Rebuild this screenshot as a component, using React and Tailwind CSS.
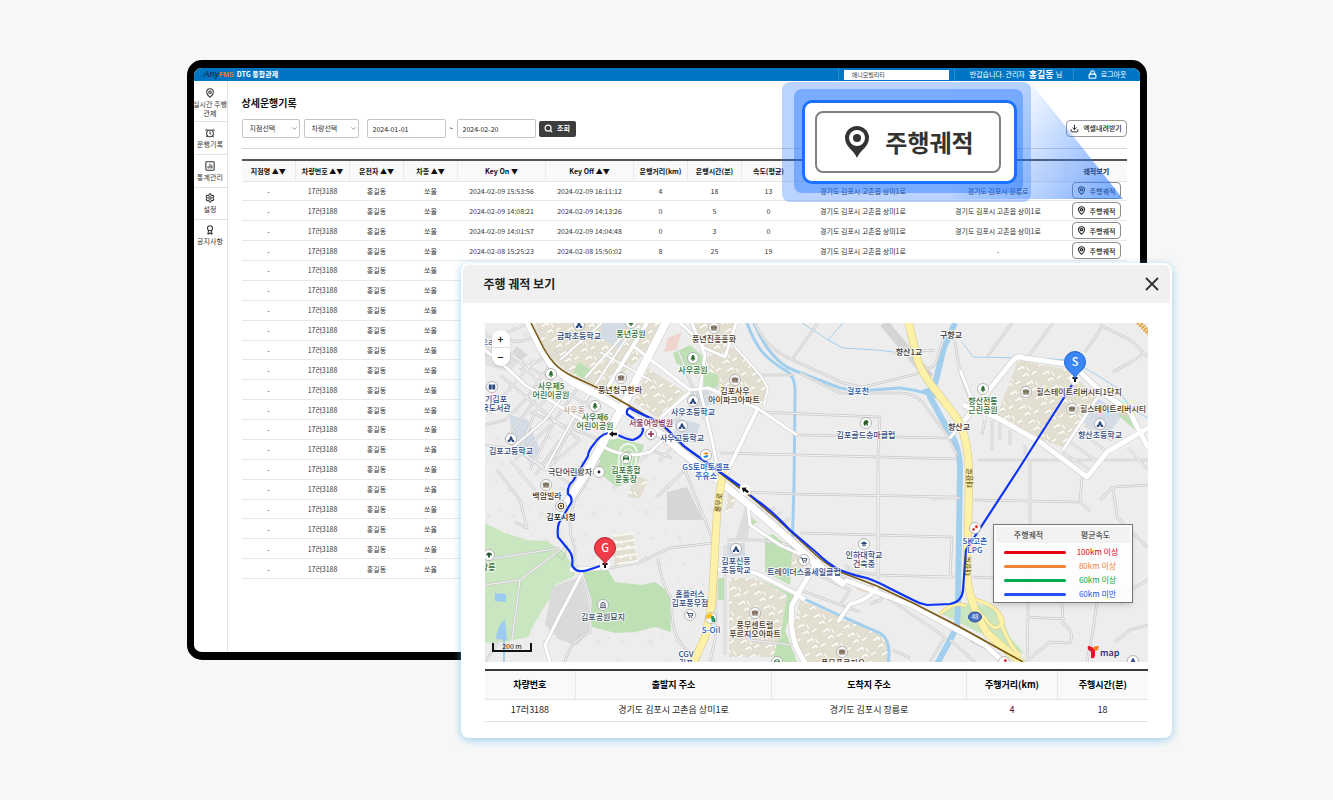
import React from 'react';
import { Search, MapPin, AlarmClock, Settings, Download, Lock, X, Award, ChevronDown } from 'lucide-react';

function ChartBox({ size }) {
  return (
    <svg width={size} height={size} viewBox="0 0 24 24" fill="none" stroke="currentColor" strokeWidth="2.5" strokeLinecap="round" aria-hidden="true">
      <rect x="2" y="2" width="20" height="20" rx="2" />
      <path d="M7.500 17V13M12 17V7M16.500 17V11" />
    </svg>
  );
}

const sideMenu = [
  { icon: MapPin, label: '실시간 주행 관제', size: 'h-[41px] pt-[3px]' },
  { icon: AlarmClock, label: '운행기록', size: 'h-[33px]' },
  { icon: ChartBox, label: '통계관리', size: 'h-[33px]' },
  { icon: Settings, label: '설정', size: 'h-[32px]' },
  { icon: Award, label: '공지사항', size: 'h-[31px]' },
];

const columns = [
  { label: '지점명 ▲▼', width: 54 },
  { label: '차량번호 ▲▼', width: 54 },
  { label: '운전자 ▲▼', width: 54 },
  { label: '차종 ▲▼', width: 54 },
  { label: 'Key On ▼', width: 88 },
  { label: 'Key Off ▲▼', width: 88 },
  { label: '운행거리(km)', width: 54 },
  { label: '운행시간(분)', width: 54 },
  { label: '속도(평균)', width: 54 },
  { label: '출발지', width: 135 },
  { label: '도착지', width: 135 },
  { label: '궤적보기', width: 61 },
];

const gochon = '경기도 김포시 고촌읍 상미1로';

const trips = [
  ['2024-02-09 15:53:56', '2024-02-09 16:11:12', '4', '18', '13', gochon, '경기도 김포시 장릉로'],
  ['2024-02-09 14:08:21', '2024-02-09 14:13:26', '0', '5', '0', gochon, gochon],
  ['2024-02-09 14:01:57', '2024-02-09 14:04:48', '0', '3', '0', gochon, gochon],
  ['2024-02-08 15:25:23', '2024-02-08 15:50:02', '8', '25', '19', gochon, '-'],
];

const emptyTrip = ['', '', '', '', '', '', ''];
const rows = Array.from({ length: 20 }, (_, i) => trips[i] || emptyTrip);

const speeds = [
  { label: '100km 이상', line: 'bg-[#e60012]', text: 'text-[#e60012]' },
  { label: '80km 이상', line: 'bg-[#f08336]', text: 'text-[#f08336]' },
  { label: '60km 이상', line: 'bg-[#00ab4e]', text: 'text-[#00ab4e]' },
  { label: '60km 미만', line: 'bg-[#2350f5]', text: 'text-[#2350f5]' },
];

// ---- map data ----
const GREEN = '#c9e6c1';
const TAN = '#e3dfd0';
const SCHOOL = '#d3dce5';

const areas = [
  [GREEN, '485,523 505,533 527,540 547,541 565,553 573,567 575,576 555,585 550,598 535,622 528,637 505,642 485,643'],
  ['#bfe0b5', '583,572 608,570 615,582 642,585 655,582 670,593 671,632 655,627 635,632 615,633 592,627 590,597'],
  ['#dadada', '552,587 581,576 588,598 591,630 577,645 560,640 545,625'],
  ['#d6d6d6', '667,492 687,487 703,520 667,520'],
  ['#e1e1e1', '485,330 500,345 520,360 510,372 485,365'],
  ['#d8d8d8', '517,346 528,355 521,360 512,352'],
  [TAN, '535,323 668,323 655,345 612,383 598,387 565,370 552,358 540,340'],
  [TAN, '648,368 685,392 658,418 634,402'],
  [TAN, '690,323 735,323 725,357 700,345'],
  [TAN, '703,358 735,347 760,375 768,388 764,405 727,400 718,385'],
  [TAN, '1018,360 1070,370 1097,398 1063,447 1047,442 997,415'],
  [TAN, '729,578 755,578 787,595 777,657 729,657'],
  [TAN, '800,600 840,617 860,623 880,633 890,647 887,662 803,662 792,633'],
  [TAN, '612,535 632,532 637,563 615,567'],
  [TAN, '633,474 648,480 640,499 628,497'],
  [TAN, '782,556 800,548 810,556 800,572 783,570'],
  [TAN, '728,492 738,494 732,508 725,515'],
  [SCHOOL, '602,323 628,323 620,348 600,338'],
  [SCHOOL, '510,415 528,420 540,450 530,462 512,448'],
  [SCHOOL, '688,392 708,390 712,405 690,407'],
  [SCHOOL, '676,418 700,424 695,443 674,437'],
  [SCHOOL, '1097,398 1123,415 1107,435 1083,422'],
  [SCHOOL, '727,543 745,543 745,572 727,572'],
  ['#bfe0b5', '590,460 612,437 644,445 632,480 617,487 598,472'],
  ['#bfe0b5', '673,353 690,345 702,355 704,375 690,372 676,363'],
  ['#bfe0b5', '703,370 718,375 718,393 704,388'],
  ['#bfe0b5', '578,362 592,370 587,380 573,373'],
  ['#bfe0b5', '765,537 773,534 792,550 790,585 765,572'],
  ['#bfe0b5', '755,577 797,597 785,630 797,662 772,662 782,625 787,595'],
  ['#bfe0b5', '718,578 726,578 726,600 718,600'],
  ['#bfe0b5', '749,515 757,522 751,526'],
  ['#bfe0b5', '1118,415 1125,408 1135,430 1128,424'],
  [GREEN, '963,603 997,607 1010,637 1025,654 990,638 940,613'],
  ['#f2d7d0', '858,583 869,587 867,593 857,590'],
  ['#f1d5cc', '668,338 682,332 676,350 664,352'],
  ['#ddd', '735,540 747,500 750,520 748,540'],
];

const water = [
  ['M747 323C757 350 765 358 788 372Q796 378 795 395L794 485L792 553', 3],
  ['M754 323C765 350 780 365 793 370L840 388L858 391L900 388Q918 390 930 395', 3],
  ['M955 323L944 347L936 380L930 397L947 428Q960 445 960 470L958 603L957 627L937 664', 6],
  ['M800 597L843 617L880 633Q892 640 888 664', 3],
  ['M802 323L828 340L843 348L877 350L893 352M828 340L843 323', 1],
  ['M962 342L973 357L1030 358L1070 360L1097 375L1117 388L1131 408L1148 418', 1],
  ['M504 640V662', 2],
];

// outlined light-grey lanes
const lanes = [
  'M818 323L793 358', 'M757 375H795', 'M760 412L880 417L878 455V575', 'M797 435L947 438',
  'M720 453L880 457L957 459', 'M750 492L793 494L957 497', 'M800 533L877 535L952 537L950 577L877 575L845 570',
  'M878 470V580', 'M800 373L840 393H900Q917 393 926 407L947 435L957 455',
  'M755 323Q765 348 793 360L843 383L863 387L920 373L935 365L945 335', 'M893 353L935 350',
  'M1012 323L987 357', 'M1053 323L1028 357', 'M1102 327L1085 352', 'M1100 325L1130 340L1148 357', 'M1145 352L1130 363L1113 372',
  'M953 332L960 372L970 400', 'M977 460H1148', 'M1030 462V520L1027 662', 'M973 500L1080 502L1082 477M1080 502L1090 511',
  'M930 498H960M930 577H955M973 577L995 578', 'M1100 500L1113 487L1148 485M1113 487L1117 517L1135 535L1148 548',
  'M1097 603L1093 630L1087 662', 'M1027 617L1065 619', 'M1062 603L1063 623Q1075 632 1070 643L1050 642L1028 660', 'M1148 625L1130 630L1115 642', 'M1148 580L1130 590L1120 604',
  'M485 355Q510 352 520 362L545 390L560 400', 'M500 335L530 323M500 335Q518 350 545 330', 'M535 360L500 400L485 408', 'M520 370L560 350',
  'M550 365L525 400L505 420L485 425', 'M565 375L535 412L520 450', 'M580 385L555 420L530 470', 'M592 392L570 430L548 470',
  'M500 375L560 425L580 440', 'M505 350L590 408', 'M485 445L520 450L545 470L580 440', 'M505 440L535 400M515 460L550 425', 'M530 412L600 440',
  'M497 470L520 500L527 528L515 522', 'M510 460L535 490M520 452L580 490', 'M535 475L560 440',
  'M600 460L575 500Q565 525 575 548L575 570', 'M600 570L640 562L670 548L712 543', 'M658 558Q660 580 672 600Q670 640 690 652',
  'M656 498L685 470L712 538', 'M678 350L705 420', 'M640 420L668 445', 'M650 440L675 420L720 385', 'M660 460L680 440', 'M640 462L650 450L672 458',
  'M583 576L591 600L590 632Q570 640 565 662', 'M485 585L520 580L560 550', 'M520 580L512 640M485 560L560 548',
  'M716 545V635L710 662M725 545V655', 'M727 540H760L790 545', 'M800 590L860 612M818 575L850 590L840 605M830 570L870 590M845 565L893 600',
  'M880 593L945 637M870 604L880 600L890 590M893 650L910 658M945 637L930 662M950 640L975 662M970 640L1000 655', 'M755 505L800 545M762 515L775 508M765 522L782 512M770 530L790 518',
  'M1070 442L1095 460M1078 430L1105 450M1085 425L1112 440M1062 452L1090 470M1128 448L1148 470', 'M750 640L792 645M485 662L500 640',
  'M992 420V450M1000 422V440M1010 430V445M985 420L982 435M1025 445V455',
];

// white streets with a thin casing: [path, width]
const streets = [
  ['M668 318L622 408L600 448L588 470L556 520', 8], ['M647 323L600 400', 4], ['M640 318L585 400', 2],
  ['M526 318L540 347L552 366L572 382L600 396L630 415L662 435L683 453L715 478L752 507L790 540L815 563L845 585', 7],
  ['M845 580L913 606L985 645L1010 668', 5],
  ['M560 360L602 323M585 378L628 330M600 352L650 380', 2], ['M632 345L690 390L708 388L757 408L797 435', 3], ['M758 408L728 470L718 490', 4],
  ['M690 318L705 355L700 390L712 440L718 470', 3], ['M700 346L725 357L736 323M680 323L704 345', 3],
  ['M735 347L760 375L768 388L764 405', 2], ['M600 445Q625 460 650 452L668 435', 3], ['M660 418L690 392', 3],
  ['M485 350Q505 365 525 385L590 425', 3], ['M545 470L575 415', 2], ['M512 448L545 420L560 400', 2],
  ['M963 422L1010 364Q1016 354 1024 358L1073 365L1097 388L1130 412L1148 448', 5],
  ['M963 405L998 418L1040 442L1087 477L1107 452L1148 428', 5], ['M1097 398L1063 450M950 438L963 422M960 370L975 408', 3],
  ['M712 570Q745 568 760 575L795 593L805 600', 4], ['M818 560Q800 590 792 605Q788 640 806 664', 5],
  ['M878 585Q870 600 850 604L838 622', 4], ['M582 573L560 615L545 645L550 662', 3], ['M570 570L600 568', 4],
  ['M748 505L750 525L780 545L812 560', 3],
];

const yellowRoads = [
  'M908 320L917 358Q920 370 933 387L957 418Q970 440 969 485L967 570Q967 600 987 633L1012 655L1025 666',
  'M723 470L717 513L712 603L705 637L692 666',
  'M969 598Q1000 605 1003 622Q995 635 985 618L972 606M940 614Q955 600 966 606M997 610Q1005 640 1020 656',
];

const routes = [
  'M600 566L588 570Q576 574 572 565Q574 555 567 548L558 537Q557 528 559 523L571 503Q573 497 568 494Q567 486 573 481L588 456Q588 451 594 444Q600 435 608 433',
  'M618 435Q628 440 633 440Q642 437 643 430Q643 426 637 421L627 414Q626 409 630 408Q636 412 655 420Q664 425 668 430L685 447L717 470L740 486',
  'M750 495L759 502Q772 511 790 530L817 553Q828 564 840 570Q852 575 867 578Q880 583 887 587L913 600Q920 604 927 605L950 604Q962 602 963 590L966 550L1018 470L1072 385',
];

const NAVY = '#2f4a80';
const BROWN = '#4a3728';
const LEAF = '#2d6e34';
const BLUE = '#2159b8';
const DARK = '#333';

const places = [
  [579, 339, '금파초등학교', NAVY], [631, 337, '풍년공원', LEAF], [714, 342, '풍년진흥흥화', BROWN], [693, 373, '사우공원', LEAF],
  [551, 389, '사우제5', LEAF], [551, 398, '어린이공원', LEAF], [620, 393, '풍년청구한라', BROWN], [595, 420, '사우제6', LEAF], [595, 429, '어린이공원', LEAF],
  [735, 394, '김포사우', BROWN], [734, 403, '아이파크아파트', BROWN], [693, 415, '사우초등학교', NAVY], [651, 426, '서울여성병원', '#93304f'],
  [682, 441, '사우고등학교', NAVY], [706, 470, 'GS토마토셀프', BLUE], [706, 479, '주유소', BLUE], [570, 475, '극단어린왕자', '#444'],
  [626, 473, '김포종합', LEAF], [626, 482, '운동장', LEAF], [511, 454, '김포고등학교', NAVY], [496, 402, '기김포', NAVY], [496, 411, '국도서관', NAVY],
  [547, 499, '백암빌라', BROWN], [561, 520, '김포시청', '#111'], [488, 570, '장릉', LEAF], [603, 620, '김포공원묘지', '#44506a'],
  [690, 597, '홈플러스', NAVY], [690, 606, '김포풍무점', NAVY], [711, 633, 'S-Oil', BLUE], [686, 657, 'CGV', NAVY], [686, 666, '김포', NAVY],
  [736, 564, '김포신풍', NAVY], [736, 573, '초등학교', NAVY], [804, 575, '트레이더스홀세일클럽', NAVY], [864, 558, '인하대학교', NAVY], [864, 567, '건축중', NAVY],
  [755, 628, '풍무센트럴', BROWN], [755, 637, '푸르지오아파트', BROWN], [843, 666, '풍무푸르지오', BROWN], [858, 394, '걸포천', '#2f5fa3'],
  [866, 438, '김포골드승마클럽', NAVY], [909, 355, '향산1교', DARK], [951, 338, '구향교', DARK], [959, 430, '향산교', DARK],
  [983, 404, '향산전통', LEAF], [983, 413, '근린공원', LEAF], [1079, 395, '힐스테이트리버시티1단지', BROWN], [1113, 412, '힐스테이트리버시티', BROWN],
  [1100, 438, '향산초등학교', NAVY], [975, 544, 'SK고촌', BLUE], [975, 553, 'LPG', BLUE],
];

const poiIcons = [
  ['school', 579, 325], ['tree', 631, 323], ['apt', 714, 328], ['tree', 693, 358], ['apt', 621, 378], ['tree', 551, 374], ['tree', 595, 406],
  ['apt', 735, 380], ['school', 693, 401], ['school', 682, 426], ['cross', 651, 434], ['gs', 706, 455], ['car', 626, 458], ['dot', 599, 472],
  ['school', 511, 439], ['book', 492, 387], ['apt', 546, 485], ['city', 561, 506], ['tomb', 489, 555], ['grave', 603, 605], ['cart', 690, 615],
  ['soil', 711, 618], ['school', 736, 549], ['cart', 804, 560], ['cap', 864, 544], ['apt', 755, 613], ['apt', 842, 652], ['horse', 866, 423],
  ['tree', 983, 389], ['apt', 1026, 392], ['apt', 1072, 409], ['school', 1100, 424], ['gas', 975, 528], ['gas', 1004, 662], ['school', 1133, 661], ['car', 777, 662],
];

const glyphs = {
  school: <path d="M0 -3.2L1.6 -1V.2L3.2 1.2V3H.8V1.4H-.8V3H-3.2V1.2L-1.6 .2V-1Z" fill="#2f4a80" />,
  tree: <path d="M0 -3.5L2 -1H1.2L2.6 1.5H.6V3.3H-.6V1.5H-2.6L-1.2 -1H-2Z" fill="#2d6e34" />,
  apt: <path d="M-2.7 2.6V-2H-1.4V2.6M-.6 2.6V-2.4H.7V2.6M1.5 2.6V-2H2.8V2.6M-3 -.3H3" fill="none" stroke="#6b5a48" strokeWidth=".8" />,
  cross: <path d="M-.8 -3H.8V-.8H3V.8H.8V3H-.8V.8H-3V-.8H-.8Z" fill="#93304f" />,
  gs: <g><path d="M-2.8 -1Q0 -4.4 3 -1.6L0 -.2Z" fill="#f08a1d" /><path d="M2.8 .5Q0 4.6 -3 1.6L.4 .2Z" fill="#1384cf" /></g>,
  car: <path d="M-3 2.6V-.4L-2 -2.6H2L3 -.4V2.6H1.8V1.6H-1.8V2.6ZM-1.8 -.6H1.8L1.4 -1.8H-1.4Z" fill="#2d6e34" fillRule="evenodd" />,
  dot: <circle r="1.4" fill="#222" />,
  book: <path d="M-3.2 -2.4H-.3V2.4H-3.2ZM.3 -2.4H3.2V2.4H.3Z" fill="#2f4a80" />,
  city: <g><circle r="3" fill="#ffe9a0" stroke="#333" strokeWidth="1" /><circle r="1" fill="#333" /></g>,
  tomb: <path d="M-3 1Q-3 -2.4 0 -2.6Q3 -2.4 3 1L1.4 -.2L.8 2.6H-.8L-1.4 -.2Z" fill="#2d5a34" />,
  grave: <path d="M-2 2.5V-1.5Q0 -4 2 -1.5V2.5M-3 2.7H3M0 -1V1.6" fill="none" stroke="#44506a" strokeWidth="1" />,
  cart: <path d="M-3.2 -2.2H-2L-1.2 1H2.2L3 -1.4H-1.8M-.8 2.6H-.4M1.6 2.6H2" fill="none" stroke="#44506a" strokeWidth="1" strokeLinecap="round" />,
  soil: <g><path d="M-4 1A3.4 3.4 0 0 1 2 -3L0 0Z" fill="#ffc20e" /><path d="M3 -1H1V1H3.4V3H.6" fill="none" stroke="#00843d" strokeWidth="1.4" /></g>,
  cap: <path d="M-3.4 -.8L0 -2.6L3.4 -.8L0 1ZM-1.8 .8L0 1.8L1.8 .8V2.2H-1.8Z" fill="#2f4a80" />,
  horse: <path d="M-2.6 0Q-2 -3 1 -3L2.8 -1L1.6 0L2 2.8H.8L.2 1L-1.2 2.8H-2Z" fill="#2a5a26" />,
  gas: <path d="M-3 1.5L-1.4 0L0 1.6L-1.4 2.8ZM0 -1L1 -3L3 -1.6L1.6 .2Z" fill="#e02020" stroke="#e02020" strokeWidth=".4" />,
};

function Marker({ x, y, letter, color, stroke }) {
  return (
    <g transform={`translate(${x} ${y})`}>
      <circle cy="17" r="5" fill="#fff" />
      <path d="M-2.5 16H2.5M0 15V20" stroke="#111" strokeWidth="2" />
      <path d="M0 16.5C-2 10 -10.5 8 -10.5 0A10.5 10.5 0 0 1 10.5 0C10.5 8 2 10 0 16.5Z" fill={color} stroke={stroke} strokeWidth="1" />
      <text y="4" textAnchor="middle" fontSize="11" fontWeight="500" fill="#fff">{letter}</text>
    </g>
  );
}

function RouteMap() {
  return (
    <svg viewBox="485 323 663 339" className="block w-full h-auto" role="img" aria-label="주행 궤적 지도">
      <defs>
        <pattern id="blocks" width="19" height="17" patternUnits="userSpaceOnUse" patternTransform="rotate(-32)">
          <path d="M2 3H8V6M11 10V5M12 14H17M3 11H8V14" fill="none" stroke="#c9c4b2" strokeWidth="2.6" />
          <path d="M2 3H8V6M11 10V5M12 14H17M3 11H8V14" fill="none" stroke="#fbfaf6" strokeWidth="1.8" />
        </pattern>
        <pattern id="houses" width="41" height="33" patternUnits="userSpaceOnUse" patternTransform="rotate(38)">
          <path d="M3 4H8V8H3ZM23 22H27V25H23ZM30 6H32V9H30ZM10 27H13V29H10Z" fill="#e5e5e5" />
        </pattern>
      </defs>

      <rect x="485" y="323" width="663" height="339" fill="#ededed" />
      <polygon points="485,323 530,323 600,400 720,480 720,662 485,662" fill="url(#houses)" />
      {areas.map(([fill, points], i) => (
        <g key={i}>
          <polygon points={points} fill={fill} />
          {fill === TAN && <polygon points={points} fill="url(#blocks)" />}
        </g>
      ))}
      {water.map(([d, w], i) => <path key={i} d={d} fill="none" stroke="#a2cfee" strokeWidth={w} />)}
      <path d="M495 593L506 594L506 602L495 601ZM496 639Q497 625 505 620L507 640Z" fill="#9ccaf0" />
      <path d="M930 396L918 392L935 385L940 400Z" fill="#a2cfee" />
      <path d="M884 323L930 378" stroke="#d4d4d4" strokeWidth="9" />
      <rect x="619" y="444" width="17" height="33" rx="8" fill="none" stroke="#eef6ea" strokeWidth="2" transform="rotate(6 627 460)" />
      <rect x="623" y="449" width="9" height="23" rx="4" fill="none" stroke="#eef6ea" transform="rotate(6 627 460)" />

      <g fill="none" strokeLinejoin="round">
        {lanes.map((d, i) => <path key={i} d={d} stroke="#c8c8c8" strokeWidth="2.6" />)}
        {lanes.map((d, i) => <path key={i} d={d} stroke="#f1f1f1" strokeWidth="1.2" />)}
        {streets.map(([d, w], i) => <path key={i} d={d} stroke="#c9c9c9" strokeWidth={w + 1} />)}
        {streets.map(([d, w], i) => <path key={i} d={d} stroke="#fff" strokeWidth={w} />)}
        {yellowRoads.map((d, i) => <path key={i} d={d} stroke="#d3c684" strokeWidth={i === 2 ? 4 : 8} />)}
        {yellowRoads.map((d, i) => <path key={i} d={d} stroke="#fdf1a8" strokeWidth={i === 2 ? 3 : 7} />)}
        <path d="M1136 320L1150 334" stroke="#e8a33c" strokeWidth="5" strokeDasharray="2 1" />
        <path d="M531 323L540 341Q546 354 554 363Q560 370 572 376L598 388L628 405L662 425L682 445L715 469L750 496L777 519L817 556Q830 567 843 573L877 586L913 603L960 627L1023 662" stroke="#7a5a12" strokeWidth="1.6" />
      </g>
      <path d="M613 536L634 533M614 543L635 540M615 550L636 547M616 557L637 554M617 564L638 561" stroke="#f8f7f2" strokeWidth="2" />
      <path d="M556 555L568 545L563 560Z" fill="none" stroke="#b5cfae" />

      {routes.map((d, i) => <path key={i} d={d} fill="none" stroke="#0d33f5" strokeWidth="2.2" strokeLinejoin="round" />)}
      {[[613, 434, 0], [745, 490, 35]].map(([x, y, r]) => (
        <g key={x} transform={`translate(${x} ${y}) rotate(${r})`}>
          <circle r="5.5" fill="#fff" />
          <path d="M-4 0L0 -3V-1.2H4V1.2H0V3Z" fill="#111" />
        </g>
      ))}

      {poiIcons.map(([type, x, y]) => (
        <g key={`${x}-${y}`} transform={`translate(${x} ${y})`}>
          <circle r="5.5" fill="#fff" stroke="#a5a5a5" strokeWidth=".8" />
          {glyphs[type]}
        </g>
      ))}

      <g fontSize="8" fontWeight="500" textAnchor="middle" stroke="#fff" strokeOpacity=".8" strokeWidth="2" paintOrder="stroke" strokeLinejoin="round">
        <text x="574" y="413" fill="#b9a48f">사우동</text>
        <text x="488" y="346" fill="#5b6c90">우리</text>
        {places.map(([x, y, label, fill]) => <text key={`${x}-${y}`} x={x} y={y} fill={fill}>{label}</text>)}
        <text transform="translate(721 503) rotate(-82)" fontSize="7" fill="#6b5a2a" stroke="none">풍무로</text>
        <text transform="translate(972 478) rotate(-90)" fontSize="7" fill="#6b5a2a" stroke="none">태장로</text>
        <text transform="translate(970 566) rotate(-90)" fontSize="7" fill="#6b5a2a" stroke="none">태장로</text>
      </g>
      <ellipse cx="975" cy="617" rx="6.5" ry="5" fill="#4d72c4" stroke="#31539c" />
      <text x="975" y="619" fontSize="6" fill="#fff" textAnchor="middle">48</text>

      <Marker x={605} y={548} letter="G" color="#ee3d48" stroke="#b8232e" />
      <Marker x={1075} y={362} letter="S" color="#3a86f7" stroke="#2165d8" />

      <path d="M493 643V651H531V643" fill="none" stroke="#111" strokeWidth="2" />
      <text x="512" y="649" fontSize="7" textAnchor="middle" fill="#111">200 m</text>

      <path d="M1088 646Q1086.500 650 1091 651.500V658Q1094.500 659 1095 656V650Q1092 646 1088 646Z" fill="#e8112d" />
      <path d="M1095 651Q1098.500 650.500 1099 646.500Q1096 645 1092.500 648Z" fill="#f47b20" />
      <text x="1100" y="656" fontSize="9" fontWeight="500" fill="#2c2560">map</text>
    </svg>
  );
}

function TraceButton() {
  return (
    <button className="inline-flex items-center justify-center gap-1 w-[49px] h-[17px] rounded-sm border border-[#8c8c8c] bg-white text-[7px] font-medium text-[#222]">
      <MapPin size={9} strokeWidth={3} />
      주행궤적
    </button>
  );
}

function TopBar() {
  return (
    <header className="flex items-center h-[13px] bg-[#0075c3] text-white text-[7px] leading-none pr-[13px]">
      <span className="ml-[10px] text-[9px] italic text-[#1a2230] font-['Liberation_Sans']">Any</span>
      <span className="text-[7px] font-bold text-[#e8792b] font-['Liberation_Sans']">FMS</span>
      <strong className="ml-[3px] font-bold">DTG 통합관제</strong>
      <div className="ml-auto flex items-center self-stretch">
        <div className="flex items-center self-stretch border-l border-[#2b8dd0] px-[5px]">
          <input aria-label="회사" defaultValue="애니모빌리티" className="w-[105px] h-[10px] bg-white px-2 text-[6px] text-[#333]" />
        </div>
        <div className="flex items-center self-stretch border-l border-[#2b8dd0] w-[119px] pl-[15px] whitespace-nowrap">
          반갑습니다. 관리자 <strong className="ml-1 text-[9px]">홍길동</strong><span className="ml-0.5">님</span>
        </div>
        <button className="flex items-center gap-1 self-stretch border-l border-[#2b8dd0] pl-[14px]">
          <Lock size={9} strokeWidth={3} />로그아웃
        </button>
      </div>
    </header>
  );
}

function SideBar() {
  return (
    <nav className="w-[34px] shrink-0 border-r border-[#e3e3e3]">
      {sideMenu.map(({ icon: Icon, label, size }) => (
        <a
          key={label}
          href="#"
          className={`flex flex-col items-center justify-center gap-0.5 text-[7px] leading-[9px] text-center text-[#333] border-b border-[#e3e3e3] last:border-b-0 ${size}`}
        >
          <Icon size={10} strokeWidth={2.5} />
          <span className="w-9 break-keep">{label}</span>
        </a>
      ))}
    </nav>
  );
}

function FilterSelect({ label, className }) {
  return (
    <div className={`relative flex ${className}`}>
      <select aria-label={label} className="appearance-none w-full h-[19px] border border-[#c4c4c4] rounded-xs bg-white pl-[7px] text-[7px] text-[#333]">
        <option>{label}</option>
      </select>
      <ChevronDown size={7} className="absolute right-[2px] top-[6px] text-[#555]" />
    </div>
  );
}

function Filters() {
  return (
    <div className="flex items-center mt-2 pb-[10px] border-b border-[#d5d5d5]">
      <FilterSelect label="지점선택" className="w-[58px]" />
      <FilterSelect label="차량선택" className="w-[55px] ml-1" />
      <input aria-label="시작일" defaultValue="2024-01-01" className="w-[79px] h-[19px] ml-2 px-[5px] border border-[#c4c4c4] rounded-xs text-[7px] text-[#222]" />
      <span className="w-[11px] text-center text-[7px]">~</span>
      <input aria-label="종료일" defaultValue="2024-02-20" className="w-[79px] h-[19px] px-[5px] border border-[#c4c4c4] rounded-xs text-[7px] text-[#222]" />
      <button className="flex items-center justify-center gap-1 w-[37px] h-[16px] ml-[3px] rounded-xs bg-[#3d3d3d] text-white text-[7px] font-bold">
        <Search size={9} strokeWidth={3} />조회
      </button>
      <button className="flex items-center justify-center gap-1 w-[61px] h-[17px] ml-auto rounded-sm border border-[#999] bg-white text-[7px] font-medium text-[#222]">
        <Download size={9} strokeWidth={2.5} />엑셀내려받기
      </button>
    </div>
  );
}

function TripTable() {
  return (
    <table className="w-full h-[420px] mt-[10px] table-fixed border-collapse border-t-2 border-[#555] text-[7px] leading-[10px] text-[#333] text-center whitespace-nowrap">
      <colgroup>
        {columns.map((c) => <col key={c.label} style={{ width: c.width }} />)}
      </colgroup>
      <thead>
        <tr className="h-[21px] bg-[#f9f9f9] border-b border-[#e5e5e5] text-[#111]">
          {columns.map((c) => <th key={c.label} className="p-0 font-bold border-r border-[#ebebeb] last:border-r-0">{c.label}</th>)}
        </tr>
      </thead>
      <tbody>
        {rows.map((r, i) => (
          <tr key={i} className="h-[19px] border-b border-[#e8e8e8]">
            <td className="p-0">-</td>
            <td className="p-0">17러3188</td>
            <td className="p-0">홍길동</td>
            <td className="p-0">쏘울</td>
            {r.map((v, j) => <td key={j} className="p-0">{v}</td>)}
            <td className="p-0">{i < 4 && <div className="flex justify-center"><TraceButton /></div>}</td>
          </tr>
        ))}
      </tbody>
    </table>
  );
}

// enlarged copy of the trace button, floating over the list
function Callout() {
  return (
    <>
      <svg viewBox="0 0 170 118" className="absolute right-[17px] top-[14px] w-[170px] h-[118px]" aria-hidden="true">
        <defs>
          <linearGradient id="beam" gradientUnits="userSpaceOnUse" x1="46" y1="36" x2="155" y2="110">
            <stop offset="0" stopColor="#2f7dff" stopOpacity=".02" />
            <stop offset="1" stopColor="#2f7dff" stopOpacity=".6" />
          </linearGradient>
        </defs>
        <path d="M78 1L170 117H0V1Z" fill="url(#beam)" />
      </svg>
      <div className="absolute right-[109px] top-[14px] rounded-lg bg-[#1a70ff]/30 pl-3 pr-2 pt-[7px] pb-[9px]">
        <div className="rounded-lg bg-[#1a70ff]/40 pl-2 pr-[6px] pt-[11px] pb-[9px]">
          <div className="rounded-[10px] border-[3px] border-[#1a70ff] bg-white pl-[10px] pr-[13px] py-2">
            <button className="flex items-center justify-center gap-4 w-[186px] h-[62px] rounded-lg border-2 border-[#808080] pl-1 text-[24px] font-bold text-[#333]">
              <svg viewBox="0 0 24 32" className="w-6 h-8" aria-hidden="true">
                <path d="M12 32C9 24 0 21 0 12A12 12 0 0 1 24 12C24 21 15 24 12 32Z" fill="#333" />
                <circle cx="12" cy="12" r="8" fill="#fff" />
                <circle cx="12" cy="12" r="4" fill="#333" />
              </svg>
              주행궤적
            </button>
          </div>
        </div>
      </div>
    </>
  );
}

function TracePopup() {
  return (
    <section className="absolute -right-8 top-[195px] w-[711px] rounded-lg bg-white border-2 border-white pb-[14px] shadow-[0_2px_8px_rgba(90,180,230,0.6)]">
      <div className="flex items-center justify-between h-[38px] rounded-t-md bg-[#f0f0f0] pl-[21px] pr-[7px]">
        <h2 className="text-[12px] font-bold text-[#222]">주행 궤적 보기</h2>
        <button aria-label="닫기"><X size={22} strokeWidth={2} className="text-[#333]" /></button>
      </div>
      <div className="px-[22px] pt-5">
        <div className="relative">
          <RouteMap />
          <div className="absolute left-[7px] top-[7px] flex flex-col w-[18px] rounded-full bg-white shadow text-[10px] font-bold leading-none text-[#222]">
            <button aria-label="확대" className="h-[18px] border-b border-[#ddd]">+</button>
            <button aria-label="축소" className="h-[18px]">−</button>
          </div>
          <div className="absolute right-[15px] bottom-[59px] w-[140px] border border-[#777] bg-white/90 px-0.5 pt-0.5 pb-px text-[8px] leading-[14px] shadow-md">
            <div className="flex h-4 items-center bg-[#f2f2f2] text-[#222]">
              <span className="w-[66px] text-center">주행궤적</span>
              <span className="flex-1 text-center">평균속도</span>
            </div>
            <ul className="pt-[2px]">
              {speeds.map((s) => (
                <li key={s.label} className={`flex items-center ${s.text}`}>
                  <span className={`w-[62px] h-[3px] ml-2 rounded-full ${s.line}`}></span>
                  <span className="flex-1 text-center">{s.label}</span>
                </li>
              ))}
            </ul>
          </div>
        </div>
        <table className="w-full mt-[7px] table-fixed border-collapse border-t-2 border-[#3a3a3a] text-center text-[#222]">
          <colgroup>
            <col className="w-[91px]" /><col className="w-[196px]" /><col className="w-[195px]" /><col className="w-[91px]" /><col className="w-[90px]" />
          </colgroup>
          <thead>
            <tr className="h-[29px] bg-[#f9f9f9] border-b border-[#e3e3e3] text-[9px] text-black">
              {['차량번호', '출발지 주소', '도착지 주소', '주행거리(km)', '주행시간(분)'].map((h) => (
                <th key={h} className="p-0 font-bold border-r border-[#e6e6e6] last:border-r-0">{h}</th>
              ))}
            </tr>
          </thead>
          <tbody>
            <tr className="h-[22px] border-b border-[#e3e3e3] text-[9px]">
              <td className="p-0">17러3188</td>
              <td className="p-0">경기도 김포시 고촌읍 상미1로</td>
              <td className="p-0">경기도 김포시 장릉로</td>
              <td className="p-0">4</td>
              <td className="p-0">18</td>
            </tr>
          </tbody>
        </table>
      </div>
    </section>
  );
}

export default function App() {
  return (
    <div className="min-h-screen bg-[#f7f7f7] pt-[60px] pb-[140px] font-['Noto_Sans_CJK_KR','Noto_Sans',sans-serif]">
      <div className="relative w-full max-w-[960px] mx-auto rounded-[15px] border-x-[7px] border-y-8 border-black bg-white">
        <div className="rounded-t-lg overflow-hidden">
          <TopBar />
        </div>
        <div className="flex">
          <SideBar />
          <main className="flex-1 pl-[14px] pr-[13px] pt-[14px] pb-[73px]">
            <h1 className="text-[10px] leading-4 font-bold text-[#111]">상세운행기록</h1>
            <Filters />
            <TripTable />
          </main>
        </div>
        <Callout />
        <TracePopup />
      </div>
    </div>
  );
}
